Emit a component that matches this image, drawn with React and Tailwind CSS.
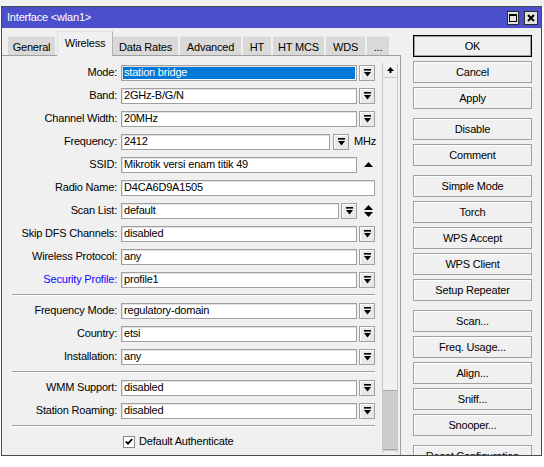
import React from 'react';

const tabs = [
  { label: 'General', w: 'w-[49px]' },
  { label: 'Wireless', w: 'w-[56px]', active: true },
  { label: 'Data Rates', w: 'w-[67px]' },
  { label: 'Advanced', w: 'w-[63px]' },
  { label: 'HT', w: 'w-[30px]' },
  { label: 'HT MCS', w: 'w-[53px]' },
  { label: 'WDS', w: 'w-[41px]' },
  { label: '...', w: 'w-[24px]' },
];

const buttonGroups = [
  ['OK', 'Cancel', 'Apply'],
  ['Disable', 'Comment'],
  ['Simple Mode', 'Torch', 'WPS Accept', 'WPS Client', 'Setup Repeater'],
  ['Scan...', 'Freq. Usage...', 'Align...', 'Sniff...', 'Snooper...'],
  ['Reset Configuration'],
];

function DropIcon() {
  return (
    <svg width="7" height="8" viewBox="0 0 7 8">
      <rect x="0" y="0" width="7" height="1.6" fill="#000" />
      <path d="M0 3H7L3.5 7.5Z" fill="#000" />
    </svg>
  );
}

function DropBtn() {
  return (
    <div className="ml-[2px] w-[16px] h-[16px] border border-[#a0a0a0] bg-[#e9e9e9] shadow-[inset_1px_1px_0_#ffffff] flex items-center justify-center">
      <DropIcon />
    </div>
  );
}

function Field({ w = 'w-[236px]', value, selected }) {
  return (
    <div className={`${w} h-[16px] border border-[#a0a0a0] shadow-[inset_1px_1px_0_#e2e2e2] bg-white flex items-center p-[1px]`}>
      <div className={`h-full w-full flex items-center pl-[1px] whitespace-nowrap overflow-hidden ${selected ? 'bg-[#0078d7] text-white' : 'text-black'}`}>
        {value}
      </div>
    </div>
  );
}

function Row({ label, blue, children }) {
  return (
    <div className="flex items-center h-[23px]">
      <div className={`w-[115px] text-right whitespace-nowrap ${blue ? 'text-[#0a0aff]' : 'text-black'}`}>{label}</div>
      <div className="ml-[4px] flex items-center">{children}</div>
    </div>
  );
}

function Separator() {
  return (
    <div className="h-[8px] flex items-center">
      <div className="ml-[10px] w-[363px] h-[2px] border-t border-[#a0a0a0] border-b border-b-white" />
    </div>
  );
}

function WinButton({ label, isDefault }) {
  return (
    <div
      className={`h-[22px] w-[119px] flex items-center justify-center bg-[#f0f0f0] whitespace-nowrap ${
        isDefault
          ? 'border border-black shadow-[inset_0_0_0_1px_#a0a0a0]'
          : 'border border-[#a0a0a0] shadow-[inset_1px_1px_0_#ffffff]'
      }`}
    >
      {label}
    </div>
  );
}

export default function App() {
  return (
    <div className="w-[544px] h-[467px] bg-white overflow-hidden font-['Liberation_Sans',Arial,sans-serif] text-[11px] tracking-[-0.2px] leading-none">
      <div className="h-[6px] bg-[#f0f0f0]" />
      <div className="ml-[1px] w-[541px] h-[450px] border border-[#4a4a4a] flex flex-col">
        {/* Title bar */}
        <div className="h-[21px] bg-[#4b4fcb] flex items-center pl-[5px] pr-[3px]">
          <span className="text-white text-[11px]">Interface &lt;wlan1&gt;</span>
          <div className="ml-auto flex items-center gap-[5px] mt-[1px]">
            <div className="w-[12px] h-[14px] bg-[#e4e4e4] border border-[#2b2b2b] flex items-center justify-center">
              <div className="w-[8px] h-[8px] border border-black border-t-2" />
            </div>
            <div className="w-[14px] h-[14px] bg-[#e4e4e4] border border-[#2b2b2b] flex items-center justify-center">
              <svg width="8" height="8" viewBox="0 0 8 8">
                <path d="M1 1L7 7M7 1L1 7" stroke="#000" strokeWidth="2" />
              </svg>
            </div>
          </div>
        </div>

        {/* Body */}
        <div className="flex-1 bg-[#f0f0f0] flex overflow-hidden">
          {/* Left: tabs + panel */}
          <div className="w-[399px] flex flex-col pt-[3px]">
            <div className="h-[25px] pl-[6px] flex items-end border-b border-[#a0a0a0]">
              {tabs.map((t) =>
                t.active ? (
                  <div
                    key={t.label}
                    className={`${t.w} h-[25px] -mb-px bg-[#f0f0f0] border-t border-l border-[#e0e0e0] border-r border-r-[#b4b4b4] flex items-center justify-center pb-[2px] text-black`}
                  >
                    {t.label}
                  </div>
                ) : (
                  <div key={t.label} className={`${t.w} h-[19px] pr-[2px]`}>
                    <div className="h-full bg-[#d9d9d9] border-t border-[#e6e6e6] flex items-center justify-center pt-[2px] text-black">
                      {t.label}
                    </div>
                  </div>
                )
              )}
            </div>

            <div className="flex-1 flex border-r border-[#a0a0a0] overflow-hidden">
              {/* Form */}
              <div className="w-[378px] pt-[5px]">
                <Row label="Mode:">
                  <Field value="station bridge" selected />
                  <DropBtn />
                </Row>
                <Row label="Band:">
                  <Field value="2GHz-B/G/N" />
                  <DropBtn />
                </Row>
                <Row label="Channel Width:">
                  <Field value="20MHz" />
                  <DropBtn />
                </Row>
                <Row label="Frequency:">
                  <Field w="w-[209px]" value="2412" />
                  <div className="ml-[1px]">
                    <DropBtn />
                  </div>
                  <span className="ml-[5px]">MHz</span>
                </Row>
                <Row label="SSID:">
                  <Field value="Mikrotik versi enam titik 49" />
                  <svg className="ml-[7px]" width="9" height="5" viewBox="0 0 9 5">
                    <path d="M4.5 0L9 5H0Z" fill="#000" />
                  </svg>
                </Row>
                <Row label="Radio Name:">
                  <Field w="w-[254px]" value="D4CA6D9A1505" />
                </Row>
                <Row label="Scan List:">
                  <Field w="w-[218px]" value="default" />
                  <DropBtn />
                  <svg className="ml-[7px]" width="9" height="12" viewBox="0 0 9 12">
                    <path d="M4.5 0L9 5H0Z" fill="#000" />
                    <path d="M0 7H9L4.5 12Z" fill="#000" />
                  </svg>
                </Row>
                <Row label="Skip DFS Channels:">
                  <Field value="disabled" />
                  <DropBtn />
                </Row>
                <Row label="Wireless Protocol:">
                  <Field value="any" />
                  <DropBtn />
                </Row>
                <Row label="Security Profile:" blue>
                  <Field value="profile1" />
                  <DropBtn />
                </Row>
                <Separator />
                <Row label="Frequency Mode:">
                  <Field value="regulatory-domain" />
                  <DropBtn />
                </Row>
                <Row label="Country:">
                  <Field value="etsi" />
                  <DropBtn />
                </Row>
                <Row label="Installation:">
                  <Field value="any" />
                  <DropBtn />
                </Row>
                <Separator />
                <Row label="WMM Support:">
                  <Field value="disabled" />
                  <DropBtn />
                </Row>
                <Row label="Station Roaming:">
                  <Field value="disabled" />
                  <DropBtn />
                </Row>
                <Separator />
                <div className="flex items-center h-[23px] pl-[121px]">
                  <div className="w-[12px] h-[12px] bg-white border border-[#8a8a8a] flex items-center justify-center">
                    <svg width="8" height="7" viewBox="0 0 8 7">
                      <path d="M0.8 3.5L3 5.7L7.2 1" stroke="#000" strokeWidth="1.8" fill="none" />
                    </svg>
                  </div>
                  <span className="ml-[4px]">Default Authenticate</span>
                </div>
              </div>

              {/* Scrollbar */}
              <div className="ml-[2px] mt-[7px] w-[16px] h-[390px] border-x border-[#c8c8c8] bg-[#f0f0f0] flex flex-col overflow-hidden">
                <div className="h-[15px] shrink-0 border-b border-[#c8c8c8] flex items-center justify-center">
                  <svg width="7" height="6" viewBox="0 0 7 6">
                    <path d="M3.5 0L7 4H0Z" fill="#000" />
                    <rect x="2.5" y="4" width="2" height="2" fill="#000" />
                  </svg>
                </div>
                <div className="h-[312px] shrink-0" />
                <div className="h-[60px] shrink-0 bg-[#cdcdcd] border-y border-[#a8a8a8]" />
                <div className="h-[15px] shrink-0 border-t border-[#c8c8c8]" />
              </div>
            </div>
          </div>

          {/* Right buttons */}
          <div className="ml-[12px] w-[119px] pt-[7px] flex flex-col gap-[9px]">
            {buttonGroups.map((group, gi) => (
              <div key={gi} className="flex flex-col gap-[4px]">
                {group.map((b) => (
                  <WinButton key={b} label={b} isDefault={b === 'OK'} />
                ))}
              </div>
            ))}
          </div>
        </div>
      </div>
    </div>
  );
}
